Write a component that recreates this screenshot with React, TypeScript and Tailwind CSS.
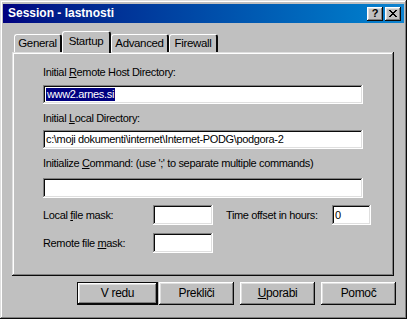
const raised =
  'shadow-[inset_-1px_-1px_0_#0a0a0a,inset_1px_1px_0_#dfdfdf,inset_-2px_-2px_0_#808080,inset_2px_2px_0_#ffffff]'
const sunken =
  'shadow-[inset_-1px_-1px_0_#ffffff,inset_1px_1px_0_#808080,inset_-2px_-2px_0_#dfdfdf,inset_2px_2px_0_#0a0a0a]'
const button =
  'shadow-[inset_-1px_-1px_0_#0a0a0a,inset_1px_1px_0_#ffffff,inset_-2px_-2px_0_#808080,inset_2px_2px_0_#dfdfdf]'

function Field({ className, children }: { className: string; children?: React.ReactNode }) {
  return (
    <div className={`bg-white ${sunken} flex items-center pl-[3px] whitespace-nowrap ${className}`}>
      {children}
    </div>
  )
}

function Tab({ label, width, active }: { label: string; width: string; active?: boolean }) {
  return active ? (
    <div className={`relative z-10 -mb-[1px] h-[22px] ${width} pt-[3px] text-center bg-[#c0c0c0] rounded-t-[3px] border-l border-t border-white border-r-[2px] border-r-[#0a0a0a] text-[11.5px]`}>
      {label}
    </div>
  ) : (
    <div className={`h-[18px] ${width} pt-[2px] text-center bg-[#c0c0c0] rounded-t-[3px] border-l border-t border-white border-r-[2px] border-r-[#0a0a0a] text-[11.5px]`}>
      {label}
    </div>
  )
}

export default function App() {
  return (
    <div
      className={`w-[407px] h-[319px] bg-[#c0c0c0] p-[3px] pt-[4px] ${raised} flex flex-col text-black text-[11px] tracking-[-0.35px] leading-[13px] font-['Liberation_Sans',Arial,sans-serif]`}
    >
      <div className="h-[19px] flex items-center justify-between pl-[5px] pr-[3px] bg-gradient-to-r from-[#000080] to-[#1084d0] tracking-normal">
        <span className="text-white font-bold text-[12px]">Session - lastnosti</span>
        <div className="flex gap-[2px]">
          <div className={`w-[16px] h-[14px] bg-[#c0c0c0] ${button} flex items-center justify-center text-[11px] font-bold leading-none`}>
            ?
          </div>
          <div className={`w-[16px] h-[14px] bg-[#c0c0c0] ${button} flex items-center justify-center`}>
            <svg width="8" height="7" viewBox="0 0 8 7">
              <path d="M0 0h2v1h1v1h2v-1h1v-1h2v1h-1v1h-1v1h-1v1h1v1h1v1h1v1h-2v-1h-1v-1h-2v1h-1v1h-2v-1h1v-1h1v-1h1v-1h-1v-1h-1v-1h-1z" fill="#000" />
            </svg>
          </div>
        </div>
      </div>

      <div className="pl-[9px] pt-[8px]">
        <div className="flex items-end h-[21px] pl-[2px]">
          <Tab label="General" width="w-[48px]" />
          <Tab label="Startup" width="w-[49px]" active />
          <Tab label="Advanced" width="w-[58px]" />
          <Tab label="Firewall" width="w-[49px]" />
        </div>
        <div className={`w-[382px] h-[224px] ${raised} pl-[31px] pt-[14px]`}>
          <div>
            Initial <u>R</u>emote Host Directory:
          </div>
          <Field className="mt-[6px] w-[320px] h-[19px]">
            <span className="bg-[#000080] text-white px-[1px]">www2.arnes.si</span>
          </Field>
          <div className="mt-[8px]">
            Initial <u>L</u>ocal Directory:
          </div>
          <Field className="mt-[5px] w-[320px] h-[19px]">c:\moji dokumenti\internet\Internet-PODG\podgora-2</Field>
          <div className="mt-[8px]">
            Initialize <u>C</u>ommand: (use ';' to separate multiple commands)
          </div>
          <Field className="mt-[8px] w-[320px] h-[20px]" />
          <div className="mt-[7px] flex items-center whitespace-nowrap">
            <span className="w-[110px]">
              Local <u>f</u>ile mask:
            </span>
            <Field className="w-[60px] h-[20px]" />
            <span className="ml-[13px] w-[106px]">Time offset in hours:</span>
            <Field className="w-[39px] h-[20px]">0</Field>
          </div>
          <div className="mt-[8px] flex items-center whitespace-nowrap">
            <span className="w-[110px]">
              Remote file <u>m</u>ask:
            </span>
            <Field className="w-[60px] h-[20px]" />
          </div>
        </div>
      </div>

      <div className="flex mt-[6px] pl-[74px] text-[12px]">
        <div className="w-[81px] h-[23px] border border-[#0a0a0a]">
          <div className={`w-full h-full ${button} flex items-center justify-center`}>V redu</div>
        </div>
        <div className={`ml-[1px] w-[75px] h-[23px] ${button} flex items-center justify-center`}>Prekliči</div>
        <div className={`ml-[6px] w-[75px] h-[23px] ${button} flex items-center justify-center`}>
          <span>
            <u>U</u>porabi
          </span>
        </div>
        <div className={`ml-[6px] w-[75px] h-[23px] ${button} flex items-center justify-center`}>Pomoč</div>
      </div>
    </div>
  )
}
